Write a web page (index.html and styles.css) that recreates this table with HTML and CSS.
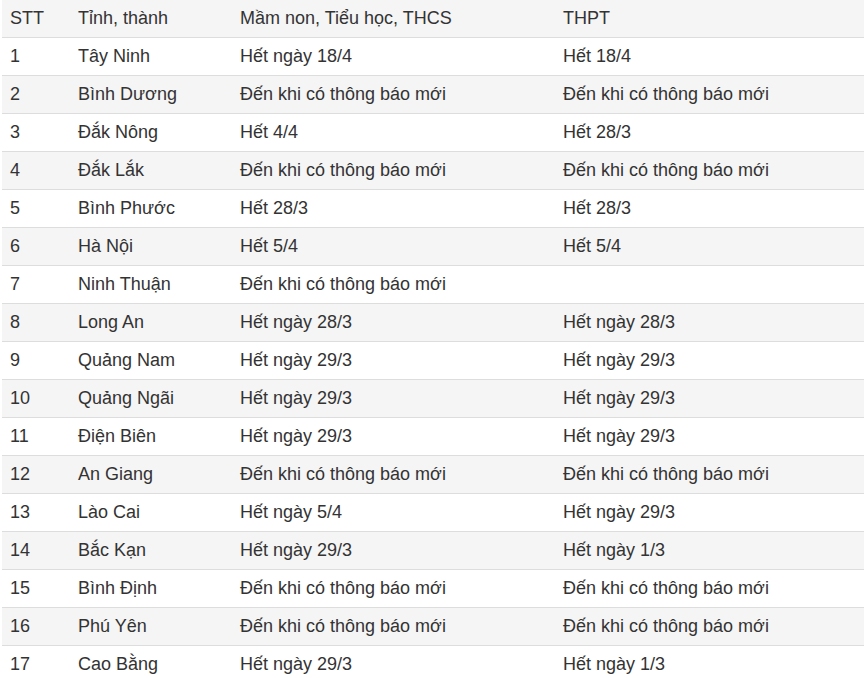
FILE: index.html
```html
<!DOCTYPE html>
<html lang="vi">
<head>
<meta charset="utf-8">
<title>Lịch nghỉ học</title>
<link rel="stylesheet" href="styles.css">
</head>
<body>
<table class="schedule">
  <colgroup>
    <col class="c-stt">
    <col class="c-prov">
    <col class="c-basic">
    <col class="c-high">
  </colgroup>
  <thead>
    <tr><th>STT</th><th>Tỉnh, thành</th><th>Mầm non, Tiểu học, THCS</th><th>THPT</th></tr>
  </thead>
  <tbody>
    <tr><td>1</td><td>Tây Ninh</td><td>Hết ngày 18/4</td><td>Hết 18/4</td></tr>
    <tr><td>2</td><td>Bình Dương</td><td>Đến khi có thông báo mới</td><td>Đến khi có thông báo mới</td></tr>
    <tr><td>3</td><td>Đắk Nông</td><td>Hết 4/4</td><td>Hết 28/3</td></tr>
    <tr><td>4</td><td>Đắk Lắk</td><td>Đến khi có thông báo mới</td><td>Đến khi có thông báo mới</td></tr>
    <tr><td>5</td><td>Bình Phước</td><td>Hết 28/3</td><td>Hết 28/3</td></tr>
    <tr><td>6</td><td>Hà Nội</td><td>Hết 5/4</td><td>Hết 5/4</td></tr>
    <tr><td>7</td><td>Ninh Thuận</td><td>Đến khi có thông báo mới</td><td></td></tr>
    <tr><td>8</td><td>Long An</td><td>Hết ngày 28/3</td><td>Hết ngày 28/3</td></tr>
    <tr><td>9</td><td>Quảng Nam</td><td>Hết ngày 29/3</td><td>Hết ngày 29/3</td></tr>
    <tr><td>10</td><td>Quảng Ngãi</td><td>Hết ngày 29/3</td><td>Hết ngày 29/3</td></tr>
    <tr><td>11</td><td>Điện Biên</td><td>Hết ngày 29/3</td><td>Hết ngày 29/3</td></tr>
    <tr><td>12</td><td>An Giang</td><td>Đến khi có thông báo mới</td><td>Đến khi có thông báo mới</td></tr>
    <tr><td>13</td><td>Lào Cai</td><td>Hết ngày 5/4</td><td>Hết ngày 29/3</td></tr>
    <tr><td>14</td><td>Bắc Kạn</td><td>Hết ngày 29/3</td><td>Hết ngày 1/3</td></tr>
    <tr><td>15</td><td>Bình Định</td><td>Đến khi có thông báo mới</td><td>Đến khi có thông báo mới</td></tr>
    <tr><td>16</td><td>Phú Yên</td><td>Đến khi có thông báo mới</td><td>Đến khi có thông báo mới</td></tr>
    <tr><td>17</td><td>Cao Bằng</td><td>Hết ngày 29/3</td><td>Hết ngày 1/3</td></tr>
  </tbody>
</table>
</body>
</html>
```
FILE: styles.css
```css
html, body {
  margin: 0;
  padding: 0;
  background: #ffffff;
}

body {
  font-family: "Liberation Sans", Arial, sans-serif;
  color: #333333;
  overflow: hidden;
}

.schedule {
  margin-left: 2px;
  width: 862px;
  border-collapse: collapse;
  border-spacing: 0;
  table-layout: fixed;
  font-size: 18px;
  line-height: 21px;
}

.c-stt { width: 68px; }
.c-prov { width: 162px; }
.c-basic { width: 323px; }
.c-high { width: 309px; }

.schedule th,
.schedule td {
  padding: 8px;
  text-align: left;
  vertical-align: top;
  white-space: nowrap;
}

.schedule th {
  font-weight: normal;
  background: #f5f5f5;
}

.schedule td {
  border-top: 1px solid #dddddd;
}

.schedule tbody tr:nth-child(even) td {
  background: #f5f5f5;
}
```
